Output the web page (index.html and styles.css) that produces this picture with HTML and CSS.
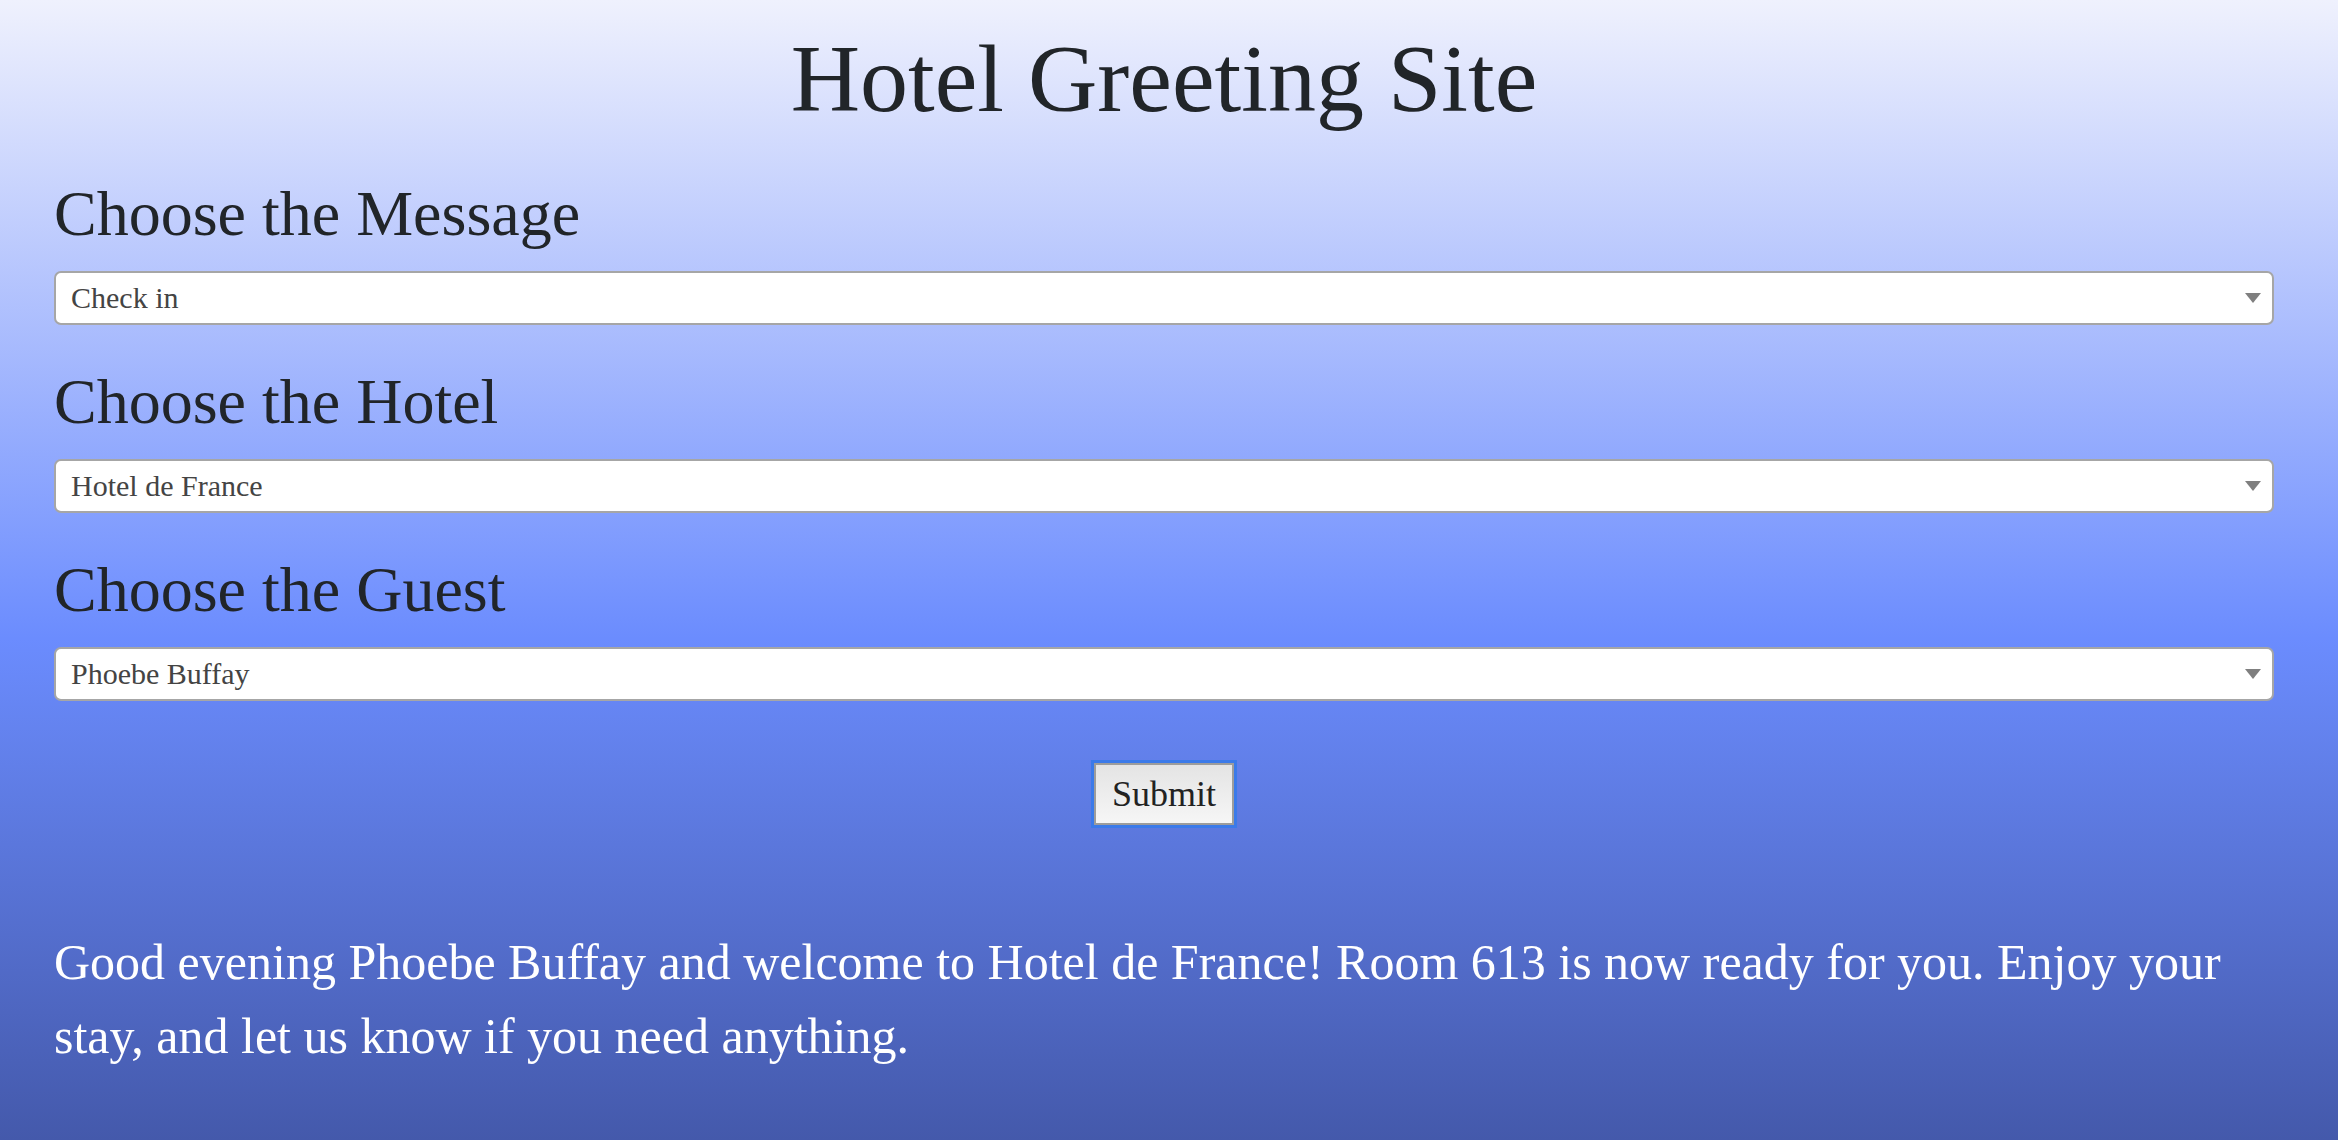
FILE: index.html
```html
<!DOCTYPE html>
<html lang="en">
<head>
<meta charset="utf-8">
<title>Hotel Greeting Site</title>
<link rel="stylesheet" href="styles.css">
</head>
<body>
<div class="page">
  <h1 class="title">Hotel Greeting Site</h1>
  <form class="form">
    <section class="field">
      <h2 class="field-label">Choose the Message</h2>
      <div class="select-wrap">
        <select class="select">
          <option>Check in</option>
          <option>Check out</option>
        </select>
      </div>
    </section>
    <section class="field">
      <h2 class="field-label">Choose the Hotel</h2>
      <div class="select-wrap">
        <select class="select">
          <option>Hotel de France</option>
        </select>
      </div>
    </section>
    <section class="field">
      <h2 class="field-label">Choose the Guest</h2>
      <div class="select-wrap">
        <select class="select">
          <option>Phoebe Buffay</option>
        </select>
      </div>
    </section>
    <div class="actions">
      <button type="button" class="submit">Submit</button>
    </div>
  </form>
  <p class="greeting">Good evening Phoebe Buffay and welcome to Hotel de France! Room 613 is now ready for you. Enjoy your stay, and let us know if you need anything.</p>
</div>
</body>
</html>
```
FILE: styles.css
```css
html {
  height: 100%;
  background: linear-gradient(to bottom, #eff1fd 0%, #6b8cfe 56%, #4459ab 100%);
}
body {
  margin: 0;
  min-height: 100%;
  font-family: "Liberation Serif", "Times New Roman", serif;
  color: #212529;
}
.page {
  padding: 21px 64px 0 54px;
}
.title {
  margin: 0;
  font-size: 96px;
  font-weight: 400;
  line-height: 1.2;
  text-align: center;
}
.form {
  display: flex;
  flex-direction: column;
  gap: 39px;
  padding-top: 40px;
  margin: 0;
}
.field {
  display: flex;
  flex-direction: column;
  gap: 18px;
}
.field-label {
  margin: 0;
  font-size: 64px;
  font-weight: 400;
  line-height: 1.2;
}
.select-wrap {
  position: relative;
}
.select-wrap::after {
  content: "";
  position: absolute;
  right: 13px;
  top: 22px;
  width: 0;
  height: 0;
  border-left: 8px solid transparent;
  border-right: 8px solid transparent;
  border-top: 10px solid #7f7f7f;
  pointer-events: none;
}
.select {
  display: block;
  width: 100%;
  height: 54px;
  box-sizing: border-box;
  -webkit-appearance: none;
  appearance: none;
  background: #fff;
  border: 2px solid #a6a6a6;
  border-radius: 7px;
  padding: 0 40px 0 15px;
  font-family: "Liberation Serif", "Times New Roman", serif;
  font-size: 30px;
  color: #444;
}
.actions {
  display: flex;
  justify-content: center;
  padding-top: 23px;
}
.submit {
  font-family: "Liberation Serif", "Times New Roman", serif;
  font-size: 36px;
  line-height: 42px;
  color: #222;
  padding: 8px 16px;
  border: 2px solid #9c9c9c;
  border-radius: 0;
  background: linear-gradient(to bottom, #e4e4e4, #f6f6f6);
  box-shadow: 0 0 0 3px #3b7ae9;
}
.greeting {
  margin: 100px 0 0;
  font-size: 50px;
  line-height: 74px;
  color: #fff;
}
```
